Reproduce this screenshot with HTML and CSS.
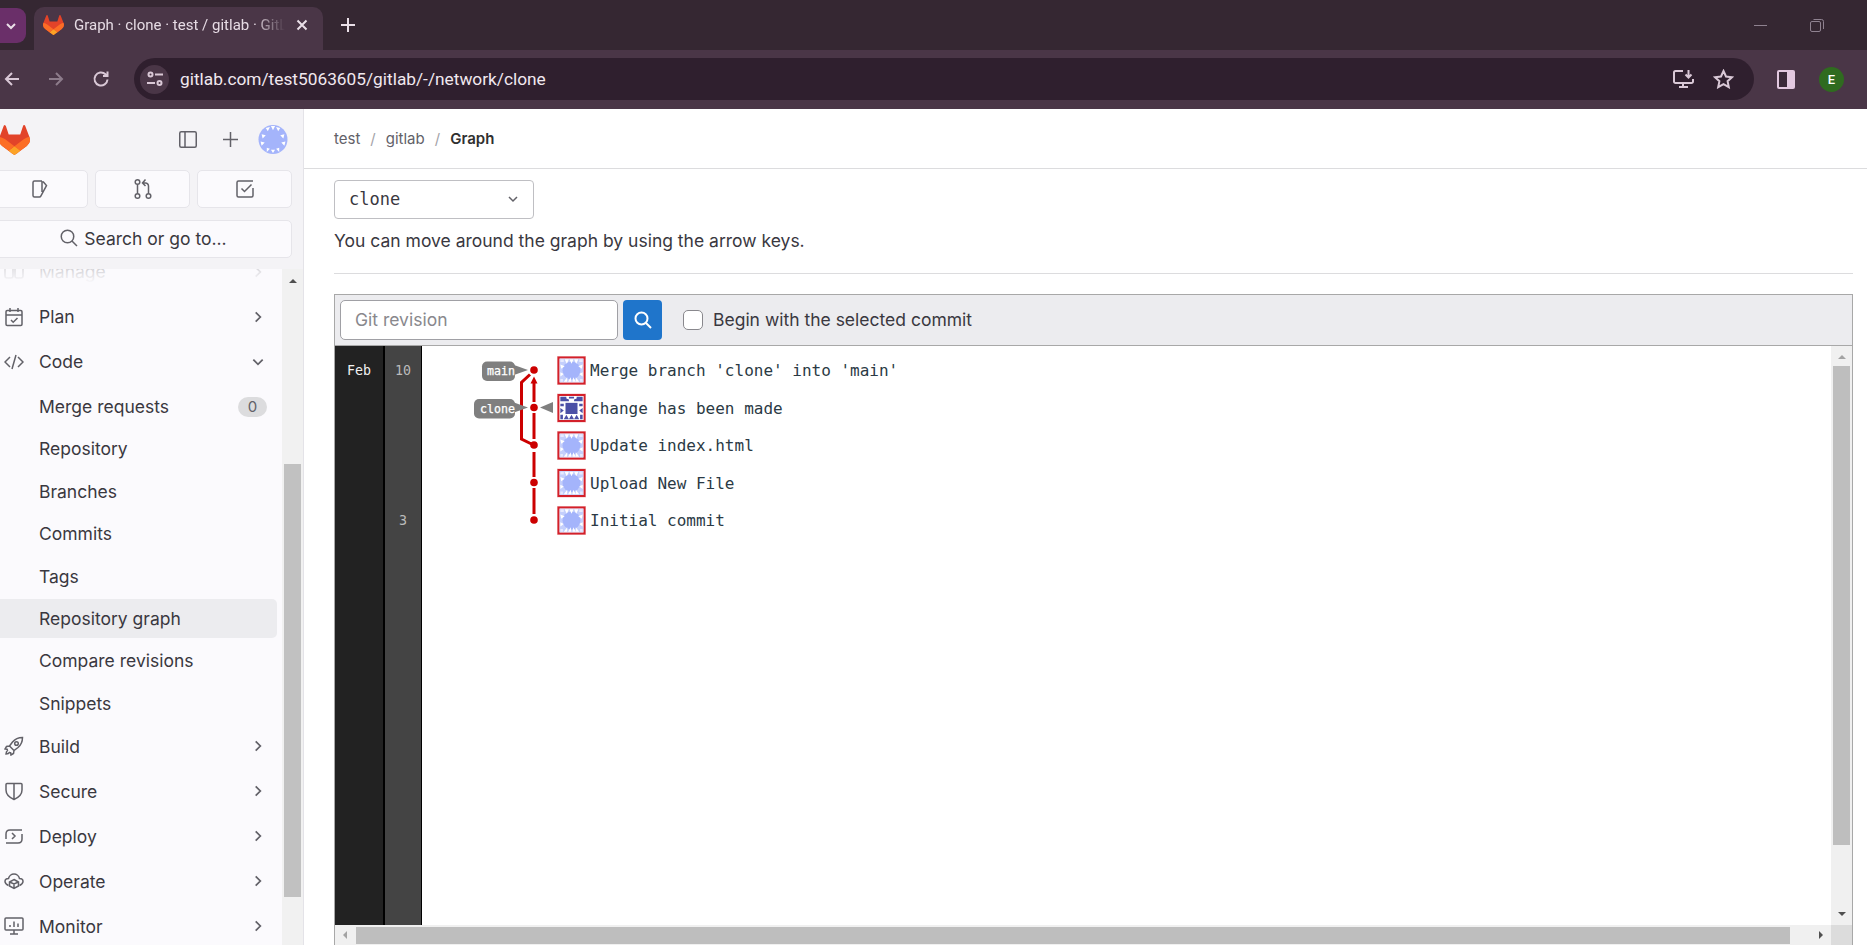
FILE: index.html
```html
<!DOCTYPE html>
<html lang="en">
<head>
  <meta charset="UTF-8" />
  <title>Graph · clone · test / gitlab · GitLab</title>
  <link rel="stylesheet" href="styles.css">
</head>
<body>
  <svg class="defs" width="0" height="0">
    <symbol id="tanuki" viewBox="0 0 25 24">
      <path fill="#E24329" d="m24.507 9.5-.034-.09L21.082.562a.896.896 0 0 0-1.694.091l-2.29 7.01H7.825L5.535.653a.898.898 0 0 0-1.694-.09L.451 9.411.416 9.5a6.297 6.297 0 0 0 2.09 7.278l.012.01.03.022 5.16 3.867 2.56 1.935 1.554 1.176a1.051 1.051 0 0 0 1.268 0l1.555-1.176 2.56-1.935 5.197-3.89.014-.01A6.297 6.297 0 0 0 24.507 9.5Z"/>
      <path fill="#FC6D26" d="m24.507 9.5-.034-.09a11.44 11.44 0 0 0-4.56 2.051l-7.447 5.632 4.742 3.584 5.197-3.89.014-.01A6.297 6.297 0 0 0 24.507 9.5Z"/>
      <path fill="#FCA326" d="m7.707 20.677 2.56 1.935 1.555 1.176a1.051 1.051 0 0 0 1.268 0l1.555-1.176 2.56-1.935-4.743-3.584-4.755 3.584Z"/>
      <path fill="#FC6D26" d="M5.01 11.461a11.43 11.43 0 0 0-4.56-2.05L.416 9.5a6.297 6.297 0 0 0 2.09 7.278l.012.01.03.022 5.16 3.867 4.745-3.584-7.444-5.632Z"/>
    </symbol>
    <symbol id="identicon" viewBox="0 0 28 28">
      <rect width="28" height="28" fill="#c4cffc"/>
      <circle cx="14" cy="14" r="10.500" fill="#a4b4fb"/>
      <path fill="#fff" d="M6 1h5L8.500 6zM11.500 1h5L14 6zM17 1h5l-2.500 5zM1 7l5 2-4 3zM27 7l-5 2 4 3zM1 16l4 2-4 3zM27 16l-4 2 4 3zM5 27l4-5v5zM10 27l3-5 1 5zM15 27l1-5 3 5zM19 27v-5l4 5z"/>
      <path fill="#e6eafe" d="M1 1h4v3H1zM23 1h4v3h-4zM1 24h3v3H1zM24 24h3v3h-3z"/>
    </symbol>
    <symbol id="identicon-dark" viewBox="0 0 28 28">
      <rect width="28" height="28" fill="#fff"/>
      <rect x="7" y="8" width="14" height="13" fill="#4b50a6"/>
      <path fill="#4b50a6" d="M1 1h7v2l3 1v2H1zM27 1h-7v2l-3 1v2h10zM11 1h6v2h-6zM1 9h4v3H1zM23 9h4v3h-4zM1 14l4 3-4 3zM27 14l-4 3 4 3zM1 22h3v5H1zM24 22h3v5h-3zM8 22l3 5H5zM14 22l3 5h-6zM20 22l3 5h-6z"/>
    </symbol>
  </svg>

  <div class="tabstrip">
    <div class="tab-group">
      <svg width="12" height="12" viewBox="0 0 12 12"><path class="ic-light" d="M2 4l4 4 4-4"/></svg>
    </div>
    <div class="tab">
      <svg class="favicon"><use href="#tanuki"/></svg>
      <span class="tab-title">Graph · clone · test / gitlab · GitLab</span>
      <svg class="tab-close" width="12" height="12" viewBox="0 0 12 12"><path class="ic-light" d="M1.500 1.500l9 9M10.500 1.500l-9 9"/></svg>
    </div>
    <svg class="new-tab" width="14" height="14" viewBox="0 0 14 14"><path class="ic-light" d="M7 0v14M0 7h14"/></svg>
    <div class="window-controls">
      <span class="win-min"></span>
      <svg width="14" height="14" viewBox="0 0 14 14"><path class="ic-win" d="M.5 5a1.500 1.500 0 0 1 1.500-1.500h7A1.500 1.500 0 0 1 10.500 5v7a1.500 1.500 0 0 1-1.500 1.500H2A1.500 1.500 0 0 1 .5 12zM3.500 1.500 h8a2 2 0 0 1 2 2v7.500"/></svg>
    </div>
  </div>

  <div class="toolbar">
    <svg class="nav-back" width="16" height="16" viewBox="0 0 16 16"><path class="ic-tool" d="M15 8H2M8 2L2 8l6 6"/></svg>
    <svg class="nav-forward" width="16" height="16" viewBox="0 0 16 16"><path class="ic-dim" d="M1 8h13M8 2l6 6-6 6"/></svg>
    <svg class="nav-reload" width="18" height="18" viewBox="0 0 18 18"><path class="ic-tool" d="M15.500 9.500a6.500 6.500 0 1 1-2-5.200L15.500 6M15.500 1.500V6H11"/></svg>
    <div class="omnibox">
      <span class="site-info">
        <svg width="18" height="16" viewBox="0 0 18 16"><circle class="ic-tool" cx="4.500" cy="3.500" r="2"/><path class="ic-tool" d="M9 3.500h8M1 12h8"/><circle class="ic-tool" cx="13.500" cy="12" r="2"/></svg>
      </span>
      <span class="url">gitlab.com/test5063605/gitlab/-/network/clone</span>
      <svg class="omni-install" width="21" height="20" viewBox="0 0 21 20"><path class="ic-tool" d="M10 2H2.500A1.500 1.500 0 0 0 1 3.500v9A1.500 1.500 0 0 0 2.500 14h16a1.500 1.500 0 0 0 1.500-1.500V10M6 18h9M10 14v4M15.500 1v7M12.500 5.500l3 3 3-3"/></svg>
      <svg class="omni-star" width="21" height="20" viewBox="0 0 21 20"><path class="ic-tool" d="M10.500 2l2.500 5.500 6 .7-4.400 4 1.200 6-5.300-3-5.300 3 1.200-6-4.400-4 6-.7z"/></svg>
    </div>
    <svg class="side-panel" width="18" height="19" viewBox="0 0 18 19"><rect x="0" y="0" width="18" height="19" rx="2" fill="#e3c9e0"/><rect x="2" y="2" width="8" height="15" fill="#3b2a39"/></svg>
    <span class="profile">E</span>
  </div>

  <div class="page">
    <aside class="sidebar">
      <div class="side-head">
        <svg class="logo"><use href="#tanuki"/></svg>
        <svg class="head-icon panel-icon" width="18" height="17" viewBox="0 0 18 17"><rect class="ic" x=".75" y=".75" width="16.500" height="15.500" rx="1.500"/><path class="ic" d="M6 1v15"/></svg>
        <svg class="head-icon plus-icon" width="15" height="15" viewBox="0 0 15 15"><path class="ic" d="M7.500 0v15M0 7.500h15"/></svg>
        <svg class="side-avatar" viewBox="0 0 28 28"><circle cx="14" cy="14" r="14" fill="#a4b4fb"/><path fill="#fff" d="M7 3l4-1-2 4zM12 1h4l-2 4zM17 2l4 1-2 3zM3 9l4 1-3 3zM25 9l-4 1 3 3zM2 16l4 1-3 3zM26 16l-4 1 3 3zM8 22l3 1-3 3zM12 24h4l-2 3zM20 22l-3 1 3 3z"/></svg>
      </div>
      <div class="quick-row">
        <a class="quick-btn quick-first">
          <svg width="20" height="20" viewBox="0 0 20 20"><path class="ic" d="M12 2H4.500A1.500 1.500 0 0 0 3 3.500v13A1.500 1.500 0 0 0 4.500 18h5a1.500 1.500 0 0 0 1.300-.8L16.500 6.500 13 2.500M12 2v11"/></svg>
        </a>
        <a class="quick-btn">
          <svg width="20" height="22" viewBox="0 0 20 22"><circle class="ic" cx="4.500" cy="4" r="2.300"/><circle class="ic" cx="4.500" cy="18" r="2.300"/><circle class="ic" cx="15.500" cy="18" r="2.300"/><path class="ic" d="M4.500 6.500v9M15.500 15.500V8a3 3 0 0 0-3-3H10M12.500 1.500L9.500 5l3 3"/></svg>
        </a>
        <a class="quick-btn">
          <svg width="20" height="20" viewBox="0 0 20 20"><path class="ic" d="M18 2H3.500A1.500 1.500 0 0 0 2 3.500v13A1.500 1.500 0 0 0 3.500 18h13a1.500 1.500 0 0 0 1.500-1.500V9M6.500 9.500l3 3 7-7"/></svg>
        </a>
      </div>
      <div class="search-btn">
        <svg width="18" height="18" viewBox="0 0 18 18"><circle class="ic" cx="7.500" cy="7.500" r="6.250"/><path class="ic" d="M12 12l5 5"/></svg>
        <span>Search or go to...</span>
      </div>

      <div class="nav-wrap">
        <nav class="nav">
          <div class="nav-scroll">
            <a class="nav-item">
              <svg class="nav-icon" viewBox="0 0 20 20"><rect class="ic" x="1" y="3" width="8" height="13" rx="2"/><rect class="ic" x="11" y="3" width="8" height="13" rx="2"/></svg>
              <span class="nav-label">Manage</span>
              <svg class="chev" viewBox="0 0 12 12"><path class="ic" d="M4 2l4 4-4 4"/></svg>
            </a>
            <a class="nav-item">
              <svg class="nav-icon" viewBox="0 0 20 20"><rect class="ic" x="2" y="3.500" width="16" height="15" rx="1.200"/><path class="ic" d="M2 8h16M6 1v4M14 1v4M7 13l2.200 2.200L13.500 11"/></svg>
              <span class="nav-label">Plan</span>
              <svg class="chev" viewBox="0 0 12 12"><path class="ic" d="M4 2l4 4-4 4"/></svg>
            </a>
            <a class="nav-item">
              <svg class="nav-icon" viewBox="0 0 20 20"><path class="ic" d="M6 5l-5 5 5 5M14 5l5 5-5 5M12 3L8 17"/></svg>
              <span class="nav-label">Code</span>
              <svg class="chev" viewBox="0 0 12 12"><path class="ic" d="M2 4l4 4 4-4"/></svg>
            </a>
            <div class="sub-list">
              <a class="sub-item">Merge requests <span class="count">0</span></a>
              <a class="sub-item">Repository</a>
              <a class="sub-item">Branches</a>
              <a class="sub-item">Commits</a>
              <a class="sub-item">Tags</a>
              <a class="sub-item active">Repository graph</a>
              <a class="sub-item">Compare revisions</a>
              <a class="sub-item">Snippets</a>
            </div>
            <a class="nav-item">
              <svg class="nav-icon" viewBox="0 0 20 20"><path class="ic" d="M18.500 1.500c-4 0-7.500 1.500-10 4.500l-3 4 4.500 4.500 4-3c3-2.500 4.500-6 4.500-10zM5.500 10l-3 .5-1.500 2.500 3 .5M10 14.500l-.5 3-2.500 1.500-.5-3M4 14c-1.500 1-2 2.500-2 4 1.500 0 3-.5 4-2"/><circle class="ic" cx="12.500" cy="7.500" r="1.800"/></svg>
              <span class="nav-label">Build</span>
              <svg class="chev" viewBox="0 0 12 12"><path class="ic" d="M4 2l4 4-4 4"/></svg>
            </a>
            <a class="nav-item">
              <svg class="nav-icon" viewBox="0 0 20 20"><path class="ic" d="M3 2.500h14c.6 0 1 .4 1 1V9c0 4.500-3.500 7.500-8 9.500C5.500 16.500 2 13.500 2 9V3.500c0-.6.4-1 1-1zM10 2.500v16"/></svg>
              <span class="nav-label">Secure</span>
              <svg class="chev" viewBox="0 0 12 12"><path class="ic" d="M4 2l4 4-4 4"/></svg>
            </a>
            <a class="nav-item">
              <svg class="nav-icon" viewBox="0 0 20 20"><path class="ic" d="M2 13V8c0-2.500 1.500-4 4-4h12M18 8v5c0 2.500-1.500 4-4 4H2M8 7l3 3-3 3"/></svg>
              <span class="nav-label">Deploy</span>
              <svg class="chev" viewBox="0 0 12 12"><path class="ic" d="M4 2l4 4-4 4"/></svg>
            </a>
            <a class="nav-item">
              <svg class="nav-icon" viewBox="0 0 20 20"><path class="ic" d="M4.500 14.500C2.500 13.500 1 12.500 1 10.500 1 8.500 2.500 7.500 4.500 7.500 5 5 7.500 3 10 3s5 2 5.500 4.500c2 0 3.500 1 3.500 3 0 2-1.500 3-3.500 4"/><path class="ic" d="M10 8.500l4.500 2.500v4L10 17.500 5.500 15v-4zM10 13v4.500M5.500 11l4.500 2 4.500-2"/></svg>
              <span class="nav-label">Operate</span>
              <svg class="chev" viewBox="0 0 12 12"><path class="ic" d="M4 2l4 4-4 4"/></svg>
            </a>
            <a class="nav-item">
              <svg class="nav-icon" viewBox="0 0 20 20"><rect class="ic" x="1" y="2" width="18" height="12" rx="1"/><path class="ic" d="M6 18h8M10 14v4M6 11V9M10 11V5.500M14 11V7.500"/></svg>
              <span class="nav-label">Monitor</span>
              <svg class="chev" viewBox="0 0 12 12"><path class="ic" d="M4 2l4 4-4 4"/></svg>
            </a>
          </div>
          <div class="nav-fade"></div>
        </nav>
        <div class="side-scroll">
          <span class="arrow-up side-arrow"></span>
          <div class="side-thumb"></div>
        </div>
      </div>
    </aside>

    <main class="content">
      <div class="breadcrumbs">
        <a>test</a><span class="sep">/</span><a>gitlab</a><span class="sep">/</span><strong>Graph</strong>
      </div>
      <div class="ref-select">
        <span>clone</span>
        <svg width="12" height="12" viewBox="0 0 12 12"><path class="ic" d="M2 4l4 4 4-4"/></svg>
      </div>
      <p class="hint">You can move around the graph by using the arrow keys.</p>
      <hr class="divider">

      <section class="network">
        <form class="network-form">
          <input class="rev-input" type="text" placeholder="Git revision">
          <button class="rev-btn" type="button">
            <svg width="18" height="18" viewBox="0 0 18 18"><circle class="ic-white" cx="7.500" cy="7.500" r="6"/><path class="ic-white" d="M12 12l5 5"/></svg>
          </button>
          <label class="rev-check"><span class="check-box"></span>Begin with the selected commit</label>
        </form>
        <div class="network-body">
          <svg class="graph" viewBox="335 346 1496 579" preserveAspectRatio="xMinYMin slice">
            <rect x="335" y="346" width="48" height="600" fill="#222"/>
            <rect x="383" y="346" width="2" height="600" fill="#000"/>
            <rect x="385" y="346" width="36" height="600" fill="#444"/>
            <rect x="421" y="346" width="1" height="600" fill="#000"/>
            <text class="g-month" x="347" y="375">Feb</text>
            <text class="g-day" x="395" y="375">10</text>
            <text class="g-day" x="399" y="525">3</text>

            <path class="g-line" d="M530 374.500L521.500 382.500V439L531.500 444"/>
            <path class="g-line" d="M534 383V402M534 413V439M534 452V477M534 488V514"/>
            <path class="g-arrow" d="M534 376.500l-3.500 7h7z"/>
            <circle class="g-dot" cx="534" cy="370" r="3.800"/>
            <circle class="g-dot" cx="534" cy="407.500" r="3.800"/>
            <circle class="g-dot" cx="534" cy="445" r="3.800"/>
            <circle class="g-dot" cx="534" cy="482.500" r="3.800"/>
            <circle class="g-dot" cx="534" cy="520" r="3.800"/>

            <path class="g-label" d="M514 365l14 5-14 5z"/>
            <rect class="g-label" x="482" y="361.500" width="33" height="19.500" rx="5"/>
            <text class="g-tag" x="487" y="375">main</text>
            <path class="g-label" d="M514 402.500l14 5-14 5z"/>
            <rect class="g-label" x="474" y="399" width="41" height="19.500" rx="5"/>
            <text class="g-tag" x="480" y="412.500">clone</text>
            <path class="g-label" d="M540 407.500l13-5.500v11z"/>

            <rect class="g-halo" x="557" y="356" width="29" height="29"/>
            <rect class="g-frame" x="558.500" y="357.500" width="26" height="26"/>
            <use href="#identicon" x="559.500" y="358.500" width="24" height="24"/>
            <rect class="g-halo" x="557" y="393.500" width="29" height="29"/>
            <rect class="g-frame" x="558.500" y="395" width="26" height="26"/>
            <use href="#identicon-dark" x="559.500" y="396" width="24" height="24"/>
            <rect class="g-halo" x="557" y="431" width="29" height="29"/>
            <rect class="g-frame" x="558.500" y="432.500" width="26" height="26"/>
            <use href="#identicon" x="559.500" y="433.500" width="24" height="24"/>
            <rect class="g-halo" x="557" y="468.500" width="29" height="29"/>
            <rect class="g-frame" x="558.500" y="470" width="26" height="26"/>
            <use href="#identicon" x="559.500" y="471" width="24" height="24"/>
            <rect class="g-halo" x="557" y="506" width="29" height="29"/>
            <rect class="g-frame" x="558.500" y="507.500" width="26" height="26"/>
            <use href="#identicon" x="559.500" y="508.500" width="24" height="24"/>

            <text class="g-msg" x="590" y="376">Merge branch 'clone' into 'main'</text>
            <text class="g-msg" x="590" y="413.500">change has been made</text>
            <text class="g-msg" x="590" y="451">Update index.html</text>
            <text class="g-msg" x="590" y="488.500">Upload New File</text>
            <text class="g-msg" x="590" y="526">Initial commit</text>
          </svg>
          <div class="vscroll">
            <span class="arrow-up"></span>
            <div class="vthumb"></div>
            <span class="arrow-down"></span>
          </div>
          <div class="hscroll">
            <span class="arrow-left"></span>
            <div class="hthumb"></div>
            <span class="arrow-right"></span>
          </div>
          <div class="corner"></div>
        </div>
      </section>
    </main>
  </div>
</body>
</html>
```

FILE: styles.css
```css
html, body {
  margin: 0;
  height: 945px;
  overflow: hidden;
}

body {
  font-family: Inter, "Noto Sans", sans-serif;
  font-size: 17.5px;
  color: #3a383f;
  background: #fff;
  display: flex;
  flex-direction: column;
}

a {
  color: inherit;
  text-decoration: none;
}

svg {
  flex: none;
  display: block;
}

.defs {
  position: absolute;
}

.ic, .ic-light, .ic-tool, .ic-dim, .ic-win, .ic-white {
  fill: none;
  stroke-width: 1.500;
}

.ic { stroke: #626168; }
.ic-light { stroke: #eadfe8; stroke-width: 2; }
.ic-tool { stroke: #d9c8d6; stroke-width: 2; }
.ic-dim { stroke: #8d7c8b; stroke-width: 2; }
.ic-win { stroke: #8f8290; stroke-width: 1; }
.ic-white { stroke: #fff; stroke-width: 2; }

/* browser chrome */
.tabstrip {
  height: 50px;
  flex: none;
  background: #352732;
  display: flex;
  align-items: flex-end;
  overflow: hidden;
}

.tab-group {
  width: 26px;
  height: 35px;
  margin-bottom: 7px;
  margin-right: 8px;
  background: #6a2f69;
  border-radius: 0 9px 9px 0;
  display: flex;
  align-items: center;
  padding-left: 5px;
  box-sizing: border-box;
}

.tab {
  width: 289px;
  height: 43px;
  background: #4a3647;
  border-radius: 10px 10px 0 0;
  display: flex;
  align-items: center;
  padding: 0 15px 7px 9px;
  box-sizing: border-box;
  color: #e6dbe4;
  font-family: Roboto, "Noto Sans", sans-serif;
  font-size: 15px;
}

.favicon {
  width: 21px;
  height: 20px;
}

.tab-title {
  flex: 1;
  margin-left: 10px;
  white-space: nowrap;
  overflow: hidden;
  -webkit-mask-image: linear-gradient(to right, #000 85%, transparent 100%);
  mask-image: linear-gradient(to right, #000 85%, transparent 100%);
}

.tab-close {
  margin-left: 11px;
}

.new-tab {
  margin: 0 0 18px 18px;
}

.window-controls {
  margin-left: auto;
  margin-right: 43px;
  margin-bottom: 18px;
  display: flex;
  align-items: center;
  gap: 43px;
}

.win-min {
  width: 13px;
  height: 1px;
  background: #8f8290;
}

.toolbar {
  height: 59px;
  flex: none;
  background: #4a3647;
  display: flex;
  align-items: center;
  padding-bottom: 1px;
  box-sizing: border-box;
}

.nav-back { margin-left: 4px; }
.nav-forward { margin-left: 28px; }
.nav-reload { margin-left: 28px; }

.omnibox {
  width: 1620px;
  height: 42px;
  margin-left: 24px;
  background: #2f1f2e;
  border-radius: 21px;
  display: flex;
  align-items: center;
  padding: 0 20px 0 6px;
  box-sizing: border-box;
}

.site-info {
  width: 29px;
  height: 29px;
  border-radius: 50%;
  background: #4a3647;
  display: flex;
  align-items: center;
  justify-content: center;
}

.url {
  margin-left: 11px;
  color: #f1e8ef;
  font-family: Roboto, "Noto Sans", sans-serif;
  font-size: 17.300px;
  white-space: nowrap;
}

.omni-install { margin-left: auto; }
.omni-star { margin-left: 19px; }

.side-panel { margin-left: 23px; }

.profile {
  width: 25px;
  height: 25px;
  margin-left: 24px;
  border-radius: 50%;
  background: #2f6b1f;
  color: #fff;
  font-family: Roboto, sans-serif;
  font-size: 13px;
  font-weight: 500;
  display: flex;
  align-items: center;
  justify-content: center;
}

/* page */
.page {
  flex: 1;
  display: flex;
  min-height: 0;
}

.sidebar {
  width: 304px;
  flex: none;
  background: #f4f3f6;
  border-right: 1px solid #e4e3e8;
  box-sizing: border-box;
  display: flex;
  flex-direction: column;
  overflow: hidden;
}

.side-head {
  height: 61px;
  flex: none;
  display: flex;
  align-items: center;
}

.logo {
  width: 31px;
  height: 30px;
  margin-left: -1px;
}

.panel-icon { margin-left: 149px; }
.plus-icon { margin-left: 26px; }

.side-avatar {
  width: 30px;
  height: 29px;
  margin-left: 20px;
}

.quick-row {
  display: flex;
  gap: 7px;
  margin-left: -8px;
  width: 300px;
}

.quick-btn {
  flex: 1;
  height: 38px;
  background: #fbfafd;
  border: 1px solid #e6e5ea;
  border-radius: 5px;
  box-sizing: border-box;
  display: flex;
  align-items: center;
  justify-content: center;
}

.quick-first {
  flex: none;
  width: 96px;
}

.search-btn {
  height: 38px;
  margin: 12px 11px 11px -8px;
  padding: 0 0 2px 3px;
  background: #fbfafd;
  border: 1px solid #e6e5ea;
  border-radius: 5px;
  box-sizing: border-box;
  display: flex;
  align-items: center;
  justify-content: center;
  gap: 6px;
  flex: none;
}

.nav-wrap {
  flex: 1;
  display: flex;
  min-height: 0;
}

.nav {
  flex: 1;
  position: relative;
  background: #fbfafd;
  overflow: hidden;
}

.nav-scroll {
  margin-top: -20px;
}

.nav-item {
  height: 45px;
  display: flex;
  align-items: center;
  padding: 0 17px 0 4px;
}

.nav-icon {
  width: 20px;
  height: 20px;
}

.nav-label {
  margin-left: 15px;
  flex: 1;
}

.chev {
  width: 14px;
  height: 14px;
}

.sub-list {
  padding: 3px 0 0;
  margin-bottom: -2.500px;
}

.sub-item {
  height: 39px;
  margin: 0 5px 3.4px 0;
  padding: 0 10px 0 39px;
  border-radius: 0 5px 5px 0;
  display: flex;
  align-items: center;
  justify-content: space-between;
}

.sub-item.active {
  background: #ececef;
}

.count {
  width: 29px;
  height: 20px;
  border-radius: 10px;
  background: #dcdcde;
  color: #626168;
  font-size: 15px;
  display: flex;
  align-items: center;
  justify-content: center;
}

.nav-fade {
  position: absolute;
  top: 0;
  left: 0;
  right: 0;
  height: 32px;
  background: linear-gradient(to bottom, rgba(251, 250, 253, 0.8), #fbfafd 45%, rgba(251, 250, 253, 0.3));
}

.side-scroll {
  width: 21px;
  flex: none;
  background: #f1f1f1;
  position: relative;
}

.side-arrow {
  display: block;
  margin: 10px auto 0;
}

.side-thumb {
  width: 17px;
  height: 433px;
  margin: 181px auto 0;
  background: #c1c1c1;
}

.arrow-up, .arrow-down, .arrow-left, .arrow-right {
  width: 0;
  height: 0;
  flex: none;
  border-style: solid;
  border-color: transparent;
}

.arrow-up {
  border-width: 0 4.500px 4.500px;
  border-bottom-color: #505050;
}

.arrow-down {
  border-width: 4.500px 4.500px 0;
  border-top-color: #505050;
}

.arrow-left {
  border-width: 4.500px 4.500px 4.500px 0;
  border-right-color: #a3a3a3;
}

.arrow-right {
  border-width: 4.500px 0 4.500px 4.500px;
  border-left-color: #505050;
}

/* main column */
.content {
  flex: 1;
  min-width: 0;
  padding: 0 14px 0 30px;
  display: flex;
  flex-direction: column;
}

.breadcrumbs {
  height: 59px;
  flex: none;
  margin: 0 -14px 0 -30px;
  padding-left: 30px;
  border-bottom: 1px solid #dcdcde;
  display: flex;
  align-items: center;
  font-size: 15px;
  color: #626168;
}

.breadcrumbs strong {
  color: #303030;
  font-weight: 600;
}

.sep {
  margin: 0 10px;
  color: #a4a3a8;
}

.ref-select {
  width: 200px;
  height: 39px;
  flex: none;
  margin-top: 11px;
  padding: 0 14px 1px 14px;
  border: 1px solid #bfbfc3;
  border-radius: 4px;
  box-sizing: border-box;
  display: flex;
  align-items: center;
  justify-content: space-between;
  font-family: "DejaVu Sans Mono", monospace;
  font-size: 17px;
}

.hint {
  margin: 11px 0 0;
  line-height: 22px;
}

.divider {
  width: 100%;
  margin: 21px 0 20px;
  border: 0;
  border-top: 1px solid #dcdcde;
}

.network {
  flex: 1;
  min-height: 0;
  border: 1px solid #a8a8a8;
  border-bottom: 0;
  display: flex;
  flex-direction: column;
}

.network-form {
  height: 51px;
  flex: none;
  padding: 5px;
  background: #ececef;
  border-bottom: 1px solid #a8a8a8;
  box-sizing: border-box;
  display: flex;
  align-items: flex-start;
}

.rev-input {
  width: 278px;
  height: 40px;
  padding: 0 14px 2px;
  border: 1px solid #a0a0a5;
  border-radius: 5px;
  box-sizing: border-box;
  font: inherit;
  color: inherit;
}

.rev-input::placeholder {
  color: #89888d;
}

.rev-btn {
  width: 39px;
  height: 40px;
  margin-left: 5px;
  padding: 0;
  border: 0;
  border-radius: 4px;
  background: #1f75cb;
  display: flex;
  align-items: center;
  justify-content: center;
}

.rev-check {
  margin-left: 21px;
  height: 38px;
  display: flex;
  align-items: center;
  gap: 10px;
}

.check-box {
  width: 20px;
  height: 20px;
  margin-top: 2px;
  border: 1px solid #89888d;
  border-radius: 5px;
  background: #fff;
  box-sizing: border-box;
}

.network-body {
  flex: 1;
  min-height: 0;
  display: grid;
  grid-template-columns: 1fr 21px;
  grid-template-rows: 1fr 20px;
}

.graph {
  width: 100%;
  height: 100%;
}

.g-month, .g-day, .g-tag, .g-msg {
  font-family: "DejaVu Sans Mono", monospace;
}

.g-month { font-size: 13.300px; fill: #f0f0f0; }
.g-day { font-size: 13.300px; fill: #bbb; }
.g-tag { font-size: 11.600px; fill: #fff; stroke: #fff; stroke-width: 0.250px; }
.g-msg { font-size: 16px; fill: #2b3a45; }

.g-line { fill: none; stroke: #c00; stroke-width: 3px; }
.g-arrow, .g-dot { fill: #c00; }
.g-label { fill: #7f7f7f; }
.g-halo { fill: #f3c4c4; }
.g-frame { fill: #fff; stroke: #d3202a; stroke-width: 2px; }

.vscroll {
  background: #f0f0f0;
  display: flex;
  flex-direction: column;
  align-items: center;
}

.vscroll .arrow-up {
  margin-top: 9px;
  border-bottom-color: #a3a3a3;
}

.vthumb {
  width: 17px;
  height: 479px;
  margin-top: 7px;
  background: #bebebe;
}

.vscroll .arrow-down {
  margin-top: auto;
  margin-bottom: 9px;
}

.hscroll {
  background: #f0f0f0;
  display: flex;
  align-items: center;
  padding: 0 8px;
}

.hthumb {
  flex: 1;
  height: 17px;
  margin: 0 29px 0 9px;
  background: #bebebe;
}

.corner {
  background: #dcdcdc;
}
```
